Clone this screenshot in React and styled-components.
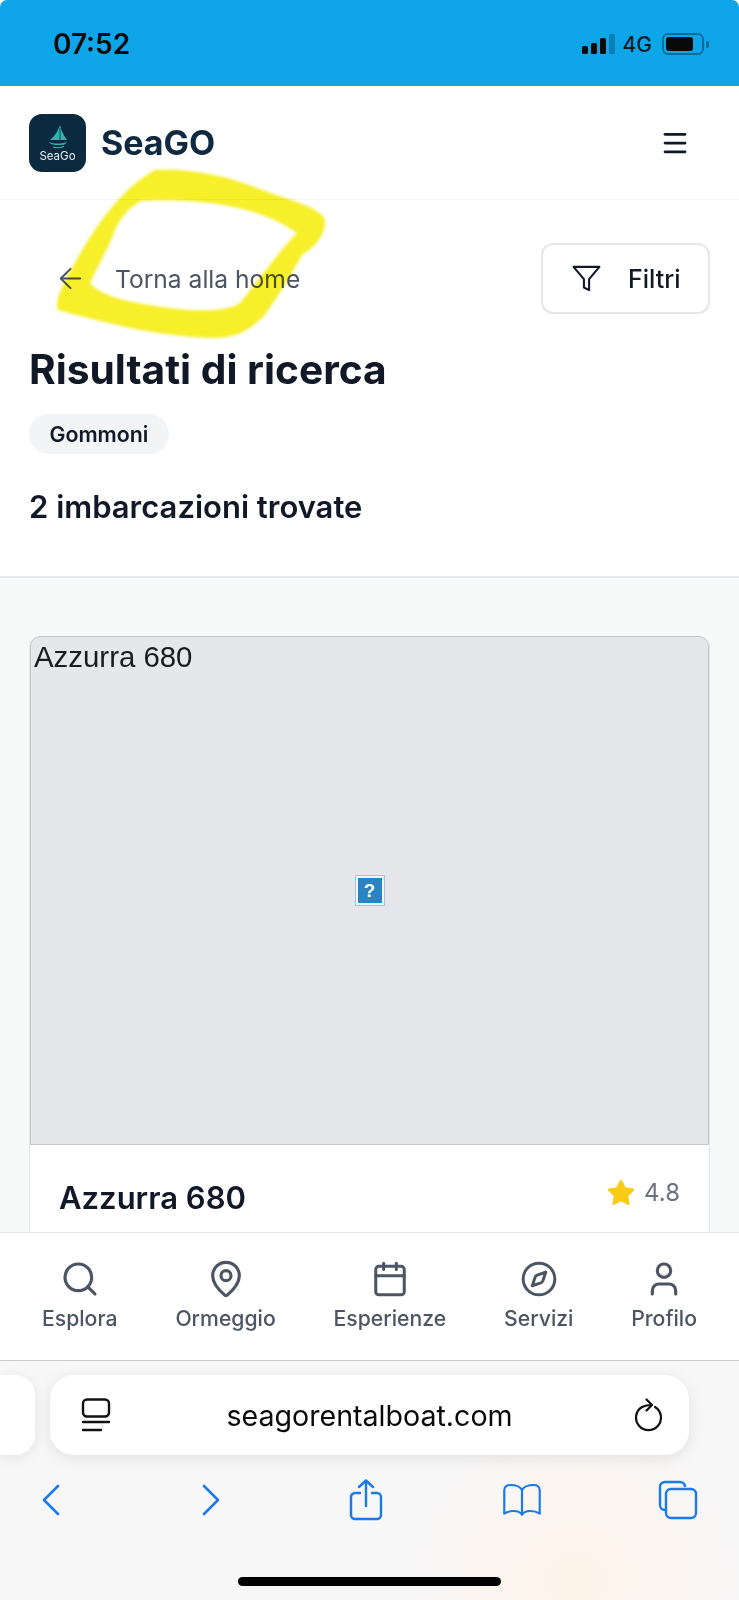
import styled, { createGlobalStyle } from "styled-components";
import { ArrowLeft, Calendar, Compass, MapPin, Menu, Search, Star, User } from "lucide-react";
import { FiFilter } from "react-icons/fi";

const navItems = [
  { label: "Esplora", Icon: Search, size: 40 },
  { label: "Ormeggio", Icon: MapPin, size: 40 },
  { label: "Esperienze", Icon: Calendar, size: 38 },
  { label: "Servizi", Icon: Compass, size: 38 },
  { label: "Profilo", Icon: User, size: 40 },
];

export default function App() {
  return (
    <Screen>
      <GlobalStyle />
      <StatusBar>
        <Time>07:52</Time>
        <StatusIcons>
          <SignalBars>
            <Bar $height={8} />
            <Bar $height={11} />
            <Bar $height={16} />
            <Bar $height={20} $dim />
          </SignalBars>
          <Network>4G</Network>
          <Battery>
            <BatteryFill />
          </Battery>
          <BatteryCap />
        </StatusIcons>
      </StatusBar>

      <Header>
        <Brand>
          <Logo>
            <svg width="24" height="24" viewBox="0 0 24 24">
              <path d="M14 0 C15 5 18 11 21 15 L4 15 C9 11 12 6 14 0 Z" fill="#2fb6ac" />
              <path d="M14 3 L14 15" stroke="#0b2a3f" strokeWidth="0.800" />
              <path d="M3 17 C8 19 15 19 21 17 C19 20 17 20 12 20 C8 20 5 20 3 17 Z" fill="#2fb6ac" />
              <path d="M7 22 C10 23 14 23 18 21.500" fill="none" stroke="#2fb6ac" strokeWidth="1.200" />
            </svg>
            <LogoText>SeaGo</LogoText>
          </Logo>
          <BrandName>SeaGO</BrandName>
        </Brand>
        <Menu size={30} color="#111827" strokeWidth={2.2} />
      </Header>

      <Main>
        <Intro>
          <TopRow>
            <BackLink>
              <ArrowLeft size={33} strokeWidth={1.5} />
              Torna alla home
            </BackLink>
            <FilterButton>
              <FiFilter size={31} strokeWidth={1.6} />
              Filtri
            </FilterButton>
          </TopRow>
          <Title>Risultati di ricerca</Title>
          <Chip>Gommoni</Chip>
          <Count>2 imbarcazioni trovate</Count>
        </Intro>

        <Results>
          <Card>
            <BrokenImage>
              <AltText>Azzurra 680</AltText>
              <MissingIcon>?</MissingIcon>
            </BrokenImage>
            <CardBody>
              <BoatName>Azzurra 680</BoatName>
              <Rating>
                <Star size={30} fill="#facc15" color="#facc15" strokeWidth={1} />
                4.8
              </Rating>
            </CardBody>
          </Card>
        </Results>
      </Main>

      <BottomNav>
        {navItems.map(({ label, Icon, size }) => (
          <NavItem key={label}>
            <NavIcon>
              <Icon size={size} strokeWidth={1.9} />
            </NavIcon>
            {label}
          </NavItem>
        ))}
      </BottomNav>

      <Browser>
        <AddressRow>
          <PrevTab />
          <AddressBar>
            <svg width="30" height="34" viewBox="0 0 30 34" fill="none" stroke="#111" strokeWidth="2.4" strokeLinecap="round">
              <rect x="2" y="1.500" width="26" height="17" rx="4" />
              <path d="M2 24 H28 M2 32 H20" />
            </svg>
            <Url>seagorentalboat.com</Url>
            <svg width="28" height="34" viewBox="0 0 28 34" fill="none" stroke="#111" strokeWidth="2.2" strokeLinecap="round" strokeLinejoin="round">
              <path d="M7 9 A12.500 12.500 0 1 0 20 9" />
              <path d="M11.500 1.500 L17 7 L11.500 12.500" />
              <path d="M17 7 C11 7 9 8 7 9" />
            </svg>
          </AddressBar>
        </AddressRow>

        <BrowserTools>
          <ToolSlot>
            <svg width="18" height="32" viewBox="0 0 18 32" fill="none" stroke="#1a7ae8" strokeWidth="2.600" strokeLinecap="round" strokeLinejoin="round">
              <path d="M16 2 L2 16 L16 30" />
            </svg>
          </ToolSlot>
          <ToolSlot>
            <svg width="18" height="32" viewBox="0 0 18 32" fill="none" stroke="#1a7ae8" strokeWidth="2.600" strokeLinecap="round" strokeLinejoin="round">
              <path d="M2 2 L16 16 L2 30" />
            </svg>
          </ToolSlot>
          <ToolSlot>
            <svg width="34" height="42" viewBox="0 0 34 42" fill="none" stroke="#1a7ae8" strokeWidth="2.400" strokeLinecap="round" strokeLinejoin="round">
              <path d="M11 14 H6 A4 4 0 0 0 2 18 V36 A4 4 0 0 0 6 40 H28 A4 4 0 0 0 32 36 V18 A4 4 0 0 0 28 14 H23" />
              <path d="M17 27 V2 M10 8 L17 1.500 L24 8" />
            </svg>
          </ToolSlot>
          <ToolSlot>
            <svg width="44" height="36" viewBox="0 0 44 36" fill="none" stroke="#1a7ae8" strokeWidth="2.400" strokeLinecap="round" strokeLinejoin="round">
              <path d="M22 7 C20 3 14 1.500 9 1.500 C6 1.500 2.500 3 2.500 7 V33 C9 29 18 29 22 34 C26 29 35 29 41.500 33 V7 C41.500 3 38 1.500 35 1.500 C30 1.500 24 3 22 7 Z" />
              <path d="M22 7 V34" />
            </svg>
          </ToolSlot>
          <ToolSlot>
            <svg width="40" height="40" viewBox="0 0 40 40" fill="none" stroke="#1a7ae8" strokeWidth="2.400" strokeLinejoin="round">
              <path d="M7 30 A5 5 0 0 1 2 25 V7 A5 5 0 0 1 7 2 H22 A5 5 0 0 1 27 7" />
              <rect x="8" y="9" width="30" height="29" rx="5" />
            </svg>
          </ToolSlot>
        </BrowserTools>
        <HomeBar />
      </Browser>

      <Highlight viewBox="0 0 739 1600" aria-hidden="true">
        <path d="M155 170 C185 168 225 174 262 190 C290 200 322 208 325 220 C326 232 318 246 302 255 C288 280 276 300 264 316 C250 330 235 338 215 338 C190 338 165 334 140 330 C115 325 80 316 58 310 C54 302 62 286 72 268 C90 235 118 190 155 170 Z M141 201 C128 208 118 220 112 238 C104 256 96 270 90 283 C100 296 130 304 188 310 C210 311 230 310 240 303 C255 285 280 250 297 233 C270 214 235 205 200 202 C180 200 155 200 141 201 Z" />
      </Highlight>
    </Screen>
  );
}

const GlobalStyle = createGlobalStyle`
  html, body {
    margin: 0;
    background: #fff;
  }
  * {
    box-sizing: border-box;
  }
`;

const Screen = styled.div`
  position: relative;
  display: flex;
  flex-direction: column;
  width: 739px;
  height: 1600px;
  overflow: hidden;
  font-family: Inter, "Liberation Sans", sans-serif;
  color: #111827;
`;

const StatusBar = styled.div`
  display: flex;
  flex: none;
  align-items: center;
  justify-content: space-between;
  height: 86px;
  padding: 2px 30px 0 53px;
  background: #0ea5e9;
  border-radius: 7px 7px 0 0;
`;

const Time = styled.div`
  font-size: 28px;
  font-weight: 600;
  color: #0a0a0a;
`;

const StatusIcons = styled.div`
  display: flex;
  align-items: center;
`;

const SignalBars = styled.div`
  display: flex;
  align-items: flex-end;
  gap: 3px;
  height: 20px;
  margin-right: 8px;
`;

const Bar = styled.span`
  width: 6px;
  height: ${(p) => p.$height}px;
  border-radius: 1.5px;
  background: ${(p) => (p.$dim ? "#0c7fb5" : "#0a0a0a")};
`;

const Network = styled.span`
  font-size: 21px;
  font-weight: 500;
  color: #0a1a26;
  margin-right: 10px;
`;

const Battery = styled.div`
  width: 42px;
  height: 22px;
  padding: 2px;
  border: 2px solid #0b6c9c;
  border-radius: 6px;
`;

const BatteryFill = styled.div`
  width: 27px;
  height: 100%;
  background: #0a0a0a;
  border-radius: 3px;
`;

const BatteryCap = styled.span`
  width: 3px;
  height: 7px;
  margin-left: 2px;
  background: #0b6c9c;
  border-radius: 0 2px 2px 0;
`;

const Header = styled.header`
  display: flex;
  flex: none;
  align-items: center;
  justify-content: space-between;
  height: 114px;
  padding: 0 49px 0 29px;
  background: #fff;
  border-bottom: 1px solid #f3f4f6;
`;

const Brand = styled.div`
  display: flex;
  align-items: center;
  gap: 15px;
`;

const Logo = styled.div`
  display: flex;
  flex-direction: column;
  align-items: center;
  justify-content: center;
  width: 57px;
  height: 58px;
  padding-top: 4px;
  background: #0b2a3f;
  border-radius: 13px;
`;

const LogoText = styled.span`
  font-size: 11.5px;
  line-height: 15px;
  color: #e8eef2;
`;

const BrandName = styled.div`
  font-size: 34px;
  font-weight: 700;
  color: #0f2a40;
`;

const Main = styled.main`
  flex: 1;
  min-height: 0;
  overflow: hidden;
  background: #f8f9f9;
`;

const Intro = styled.section`
  padding: 43px 29px 49px;
  background: #fff;
  border-bottom: 2px solid #e5e7eb;
`;

const TopRow = styled.div`
  display: flex;
  align-items: center;
  justify-content: space-between;
  padding-left: 25px;
`;

const BackLink = styled.a`
  display: flex;
  align-items: center;
  gap: 28px;
  font-size: 24.600px;
  color: #4b5563;
`;

const FilterButton = styled.button`
  display: flex;
  align-items: center;
  gap: 26px;
  width: 169px;
  height: 71px;
  padding: 0 0 0 28px;
  font-family: inherit;
  font-size: 25px;
  font-weight: 500;
  color: #111827;
  background: #fff;
  border: 2px solid #e5e7eb;
  border-radius: 12px;
`;

const Title = styled.h1`
  margin: 31px 0 0;
  font-size: 40.700px;
  font-weight: 700;
  line-height: 50px;
  color: #111827;
`;

const Chip = styled.div`
  display: inline-flex;
  align-items: center;
  height: 40px;
  margin-top: 19px;
  padding: 0 20.500px;
  font-size: 21.300px;
  font-weight: 600;
  background: #f3f4f6;
  border-radius: 20px;
`;

const Count = styled.h2`
  margin: 33px 0 0;
  font-size: 31px;
  font-weight: 600;
  line-height: 40px;
`;

const Results = styled.section`
  padding: 58px 29px 0;
`;

const Card = styled.article`
  background: #fff;
  border: 1px solid #e5e7eb;
  border-top: 0;
  border-radius: 10px 10px 0 0;
  overflow: hidden;
`;

const BrokenImage = styled.div`
  display: flex;
  align-items: center;
  justify-content: center;
  position: relative;
  height: 509px;
  background: #e5e7eb;
  border: 1px solid #c4c6c9;
  border-radius: 10px 10px 0 0;
`;

const AltText = styled.span`
  position: absolute;
  top: 3px;
  left: 3px;
  font-family: "Liberation Sans", sans-serif;
  font-size: 29.400px;
  color: #1c1c1e;
`;

const MissingIcon = styled.span`
  display: flex;
  align-items: center;
  justify-content: center;
  width: 28px;
  height: 29px;
  font-family: "Liberation Sans", sans-serif;
  font-size: 19px;
  font-weight: 700;
  color: #fff;
  background: #2a84c4;
  border: 2px solid #f2f6fa;
  outline: 1px solid #a9c4d8;
`;

const CardBody = styled.div`
  display: flex;
  align-items: flex-start;
  justify-content: space-between;
  padding: 33px 29px 60px;
`;

const BoatName = styled.h3`
  margin: 0;
  font-size: 31px;
  font-weight: 600;
  line-height: 40px;
  color: #111827;
`;

const Rating = styled.div`
  display: flex;
  align-items: center;
  gap: 8px;
  margin-top: -1px;
  font-size: 24px;
  line-height: 31px;
  color: #6b7280;
`;

const BottomNav = styled.nav`
  display: flex;
  flex: none;
  justify-content: space-between;
  height: 129px;
  padding: 27px 42px 0;
  background: #fff;
  border-top: 1px solid #e5e7eb;
  border-bottom: 1px solid #c9cacc;
`;

const NavItem = styled.a`
  display: flex;
  flex-direction: column;
  align-items: center;
  gap: 8px;
  font-size: 21.200px;
  font-weight: 500;
  line-height: 24px;
  color: #4b5563;
`;

const NavIcon = styled.span`
  display: flex;
  align-items: center;
  justify-content: center;
  height: 38px;
`;

const Browser = styled.div`
  flex: none;
  height: 239px;
  padding-top: 14px;
  background:
    radial-gradient(circle at 78% 92%, #fff3e8 0, rgba(255, 243, 232, 0) 28%),
    #f7f7f8;
`;

const AddressRow = styled.div`
  display: flex;
  gap: 15px;
  height: 80px;
`;

const PrevTab = styled.div`
  width: 35px;
  background: #fff;
  border-radius: 0 20px 20px 0;
  box-shadow: 0 3px 14px rgba(0, 0, 0, 0.08);
`;

const AddressBar = styled.div`
  display: flex;
  align-items: center;
  justify-content: space-between;
  width: 639px;
  padding: 0 26px 0 31px;
  background: #fff;
  border-radius: 24px;
  box-shadow: 0 3px 16px rgba(0, 0, 0, 0.09);
`;

const Url = styled.span`
  margin-right: 7px;
  font-size: 28.600px;
  color: #0a0a0a;
`;

const BrowserTools = styled.div`
  display: grid;
  grid-template-columns: 160px 155px 156px 156px 40px;
  height: 44px;
  margin-top: 23px;
  padding-left: 31px;
`;

const ToolSlot = styled.div`
  display: flex;
  align-items: center;
  justify-content: center;
  width: 40px;
`;

const HomeBar = styled.div`
  width: 263px;
  height: 9px;
  margin: 55px auto 0;
  background: #000;
  border-radius: 5px;
`;

const Highlight = styled.svg`
  position: absolute;
  top: 0;
  left: 0;
  width: 739px;
  height: 1600px;
  pointer-events: none;
  mix-blend-mode: multiply;
  filter: blur(1.5px);

  path {
    fill: #f6ef2a;
    fill-rule: evenodd;
  }
`;
